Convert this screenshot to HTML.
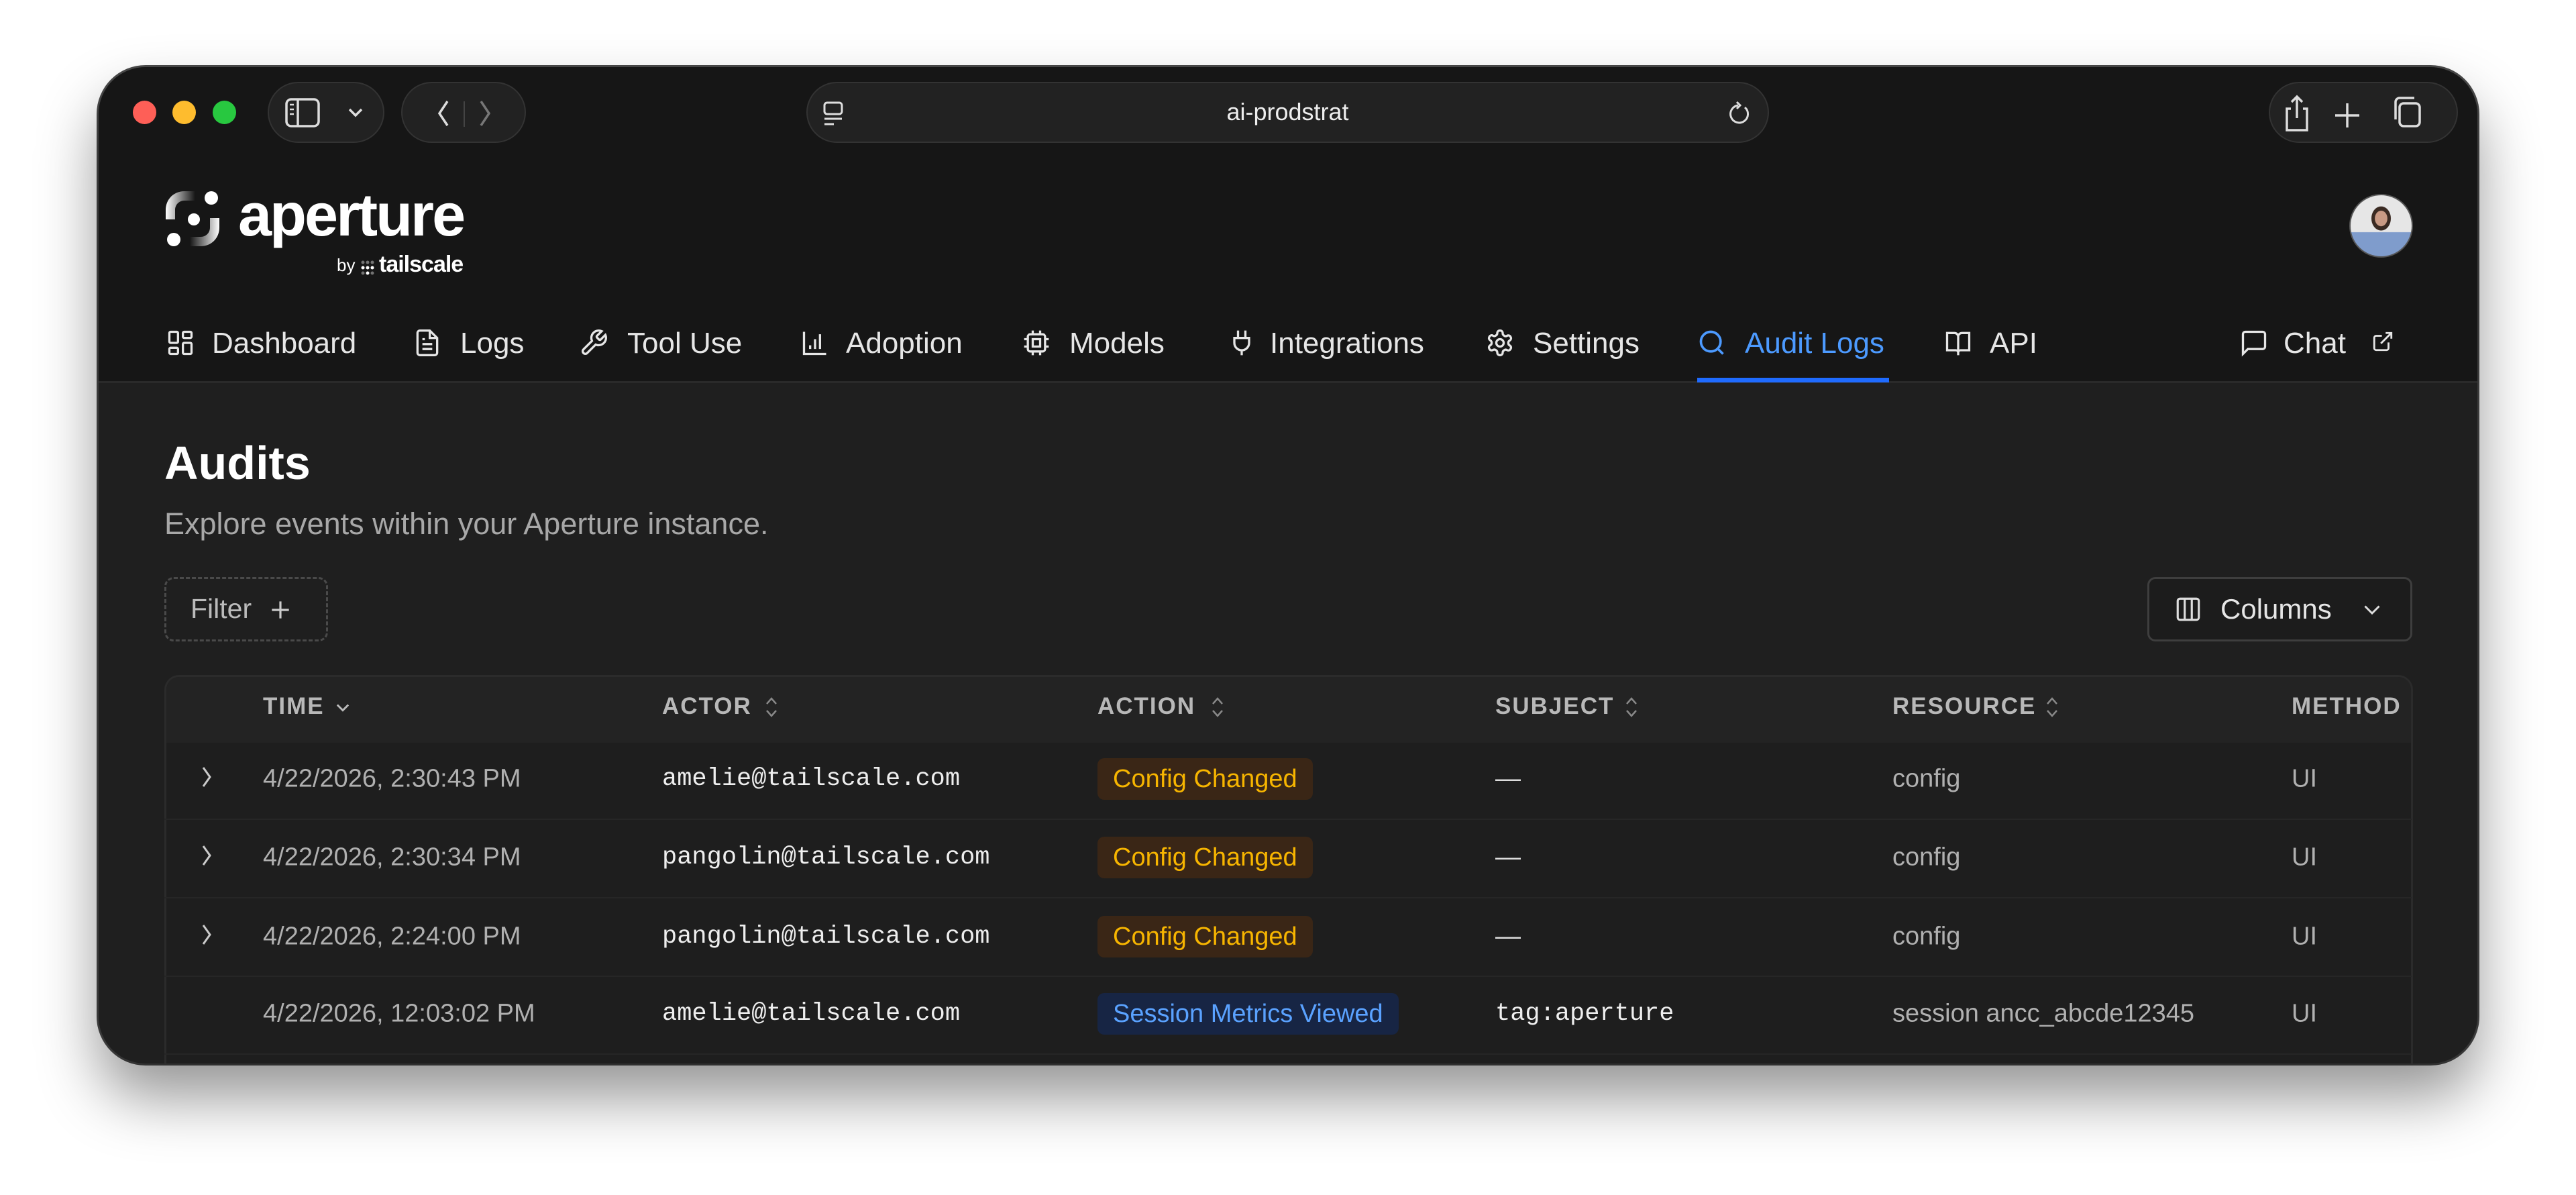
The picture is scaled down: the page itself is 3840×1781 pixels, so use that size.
<!DOCTYPE html>
<html><head><meta charset="utf-8"><style>
*{margin:0;padding:0;box-sizing:border-box}
html,body{width:3840px;height:1781px;background:#fff;overflow:hidden;font-family:"Liberation Sans",sans-serif}
.win{position:absolute;left:147px;top:100px;width:3546px;height:1485px;border-radius:70px;background:#1f1f1f;overflow:hidden;box-shadow:0 50px 90px rgba(0,0,0,.42),0 0 0 3px #4a4a4a;}
.head{position:absolute;left:0;top:0;width:100%;height:471px;background:#161616;border-bottom:3px solid #2a2a2a}
.a{position:absolute}
.pill{position:absolute;top:22px;height:91px;border-radius:46px;background:#222;border:2px solid #333}
.dot{position:absolute;top:50px;width:35px;height:35px;border-radius:50%}
.nav{position:absolute;top:412px;transform:translateY(-50%);color:#e6e6e6;font-size:44px;white-space:nowrap}
.ni{position:absolute;top:389px}
.th{position:absolute;top:953px;transform:translateY(-50%);color:#b8b8b8;font-size:35px;font-weight:bold;letter-spacing:2px;white-space:nowrap}
.td{position:absolute;transform:translateY(-50%);color:#b0b0b0;font-size:38px;white-space:nowrap}
.mono{font-family:"Liberation Mono",monospace;color:#eee;font-size:37px}
.badge{position:absolute;height:62px;border-radius:10px;padding:0 23px;line-height:62px;font-size:38px;transform:translateY(-50%)}
.cfg{background:#3a2616;color:#f7b500}
.ses{background:#172544;color:#5aa2ff}
.sep{position:absolute;left:98px;width:3350px;height:2px;background:#262626}
</style></head><body>
<div class="win">
 <div class="head"></div>
 <div class="dot" style="left:51px;background:#fe5f57"></div>
 <div class="dot" style="left:110px;background:#febc2e"></div>
 <div class="dot" style="left:170px;background:#28c840"></div>
 <div class="pill" style="left:252px;width:174px"></div>
 <svg class="a" style="left:278px;top:45px" width="130" height="46" viewBox="0 0 130 46" fill="none" stroke="#ddd" stroke-width="3.5"><rect x="2" y="3" width="48" height="40" rx="7"/><line x1="19" y1="3" x2="19" y2="43"/><path d="M7 11h6M7 18h6M7 25h6" stroke-width="2.5"/><path d="M96 18l9 9 9-9"/></svg>
 <div class="pill" style="left:451px;width:186px"></div>
 <svg class="a" style="left:470px;top:45px" width="150" height="48" viewBox="0 0 150 48" fill="none" stroke-width="3.5"><path d="M50 6L38 24l12 18" stroke="#ddd"/><line x1="75" y1="6" x2="75" y2="44" stroke="#444" stroke-width="2"/><path d="M100 6l12 18-12 18" stroke="#777"/></svg>
 <div class="pill" style="left:1055px;width:1435px"></div>
 <svg class="a" style="left:1076px;top:50px" width="40" height="40" viewBox="0 0 40 40" fill="none" stroke="#ddd" stroke-width="3"><rect x="6" y="3" width="26" height="17" rx="4"/><path d="M6 27h26M6 35h14"/></svg>
 <div class="a" style="left:1055px;width:1435px;top:67px;transform:translateY(-50%);text-align:center;color:#eee;font-size:36px">ai-prodstrat</div>
 <svg class="a" style="left:2426px;top:48px" width="40" height="44" viewBox="0 0 40 44" fill="none" stroke="#ddd" stroke-width="3"><path d="M28 12a13 13 0 1 1-10-3"/><path d="M16 4l5 5-5 5"/></svg>
 <div class="pill" style="left:3235px;width:282px"></div>
 <svg class="a" style="left:3252px;top:40px" width="250" height="60" viewBox="0 0 250 60" fill="none" stroke="#ddd" stroke-width="3.5"><path d="M16 22h-6v32h30V22h-6M25 4v32M17 12l8-8 8 8"/><path d="M100 14v36M82 32h36"/><rect x="178" y="14" width="30" height="34" rx="6"/><path d="M172 38V12a6 6 0 0 1 6-6h22"/></svg>
 <svg class="a" style="left:98px;top:183px" width="84" height="86" viewBox="0 0 84 86"><defs><linearGradient id="g1" x1="0" x2="1"><stop offset="0" stop-color="#fff"/><stop offset="1" stop-color="#fff" stop-opacity="0"/></linearGradient><linearGradient id="g2" x1="1" x2="0"><stop offset="0" stop-color="#fff"/><stop offset="1" stop-color="#fff" stop-opacity="0"/></linearGradient></defs><path d="M46 2H30C14 2 2 14 2 30v14h14V30c0-8 6-14 14-14h16z" fill="url(#g1)"/><path d="M38 84h16c16 0 28-12 28-28V42H68v14c0 8-6 14-14 14H38z" fill="url(#g2)"/><circle cx="70" cy="12" r="10" fill="#fff"/><circle cx="14" cy="74" r="10" fill="#fff"/><circle cx="44" cy="44" r="9" fill="#fff"/></svg>
 <div class="a" style="left:208px;top:170px;color:#fff;font-size:90px;font-weight:bold;letter-spacing:-3px">aperture</div>
 <div class="a" style="left:355px;top:280px;color:#fff;font-size:26px">by</div>
 <svg class="a" style="left:390px;top:287px" width="22" height="24" viewBox="0 0 22 24" fill="#fff"><circle cx="4" cy="4" r="2.5" opacity=".4"/><circle cx="11" cy="4" r="2.5" opacity=".4"/><circle cx="18" cy="4" r="2.5" opacity=".4"/><circle cx="4" cy="12" r="2.5"/><circle cx="11" cy="12" r="2.5"/><circle cx="18" cy="12" r="2.5"/><circle cx="4" cy="20" r="2.5" opacity=".4"/><circle cx="11" cy="20" r="2.5"/><circle cx="18" cy="20" r="2.5" opacity=".4"/></svg>
 <div class="a" style="left:418px;top:275px;color:#fff;font-size:34px;font-weight:bold;letter-spacing:-1px">tailscale</div>
 <div class="a" style="left:3355px;top:189px;width:95px;height:95px;border-radius:50%;background:radial-gradient(ellipse at 50% 38%,#c99a84 0 14%,#3a2a22 15% 22%,transparent 23%),linear-gradient(#e6e6e6 0 60%,#7f9ccc 61%);border:2px solid #555"></div>
 <svg class="ni" style="left:100px" width="44" height="44" viewBox="0 0 24 24" fill="none" stroke="#e6e6e6" stroke-width="1.8"><rect x="3" y="3" width="7" height="9" rx="1"/><rect x="14" y="3" width="7" height="5" rx="1"/><rect x="14" y="12" width="7" height="9" rx="1"/><rect x="3" y="16" width="7" height="5" rx="1"/></svg>
 <div class="nav" style="left:169px">Dashboard</div>
 <svg class="ni" style="left:468px" width="44" height="44" viewBox="0 0 24 24" fill="none" stroke="#e6e6e6" stroke-width="1.8"><path d="M14 2H6a2 2 0 0 0-2 2v16a2 2 0 0 0 2 2h12a2 2 0 0 0 2-2V8z"/><path d="M14 2v6h6M8 13h8M8 17h8M8 9h2"/></svg>
 <div class="nav" style="left:539px">Logs</div>
 <svg class="ni" style="left:716px" width="44" height="44" viewBox="0 0 24 24" fill="none" stroke="#e6e6e6" stroke-width="1.8"><path d="M14.7 6.3a1 1 0 0 0 0 1.4l1.6 1.6a1 1 0 0 0 1.4 0l3.8-3.8a6 6 0 0 1-7.9 7.9l-6.9 6.9a2.1 2.1 0 0 1-3-3l6.9-6.9a6 6 0 0 1 7.9-7.9z"/></svg>
 <div class="nav" style="left:788px">Tool Use</div>
 <svg class="ni" style="left:1046px" width="44" height="44" viewBox="0 0 24 24" fill="none" stroke="#e6e6e6" stroke-width="1.8"><path d="M3 3v18h18M8 17v-3M12 17V9M16 17V5"/></svg>
 <div class="nav" style="left:1114px">Adoption</div>
 <svg class="ni" style="left:1376px" width="44" height="44" viewBox="0 0 24 24" fill="none" stroke="#e6e6e6" stroke-width="1.8"><rect x="5" y="5" width="14" height="14" rx="2"/><rect x="9" y="9" width="6" height="6"/><path d="M9 2v3M15 2v3M9 19v3M15 19v3M2 9h3M2 15h3M19 9h3M19 15h3"/></svg>
 <div class="nav" style="left:1447px">Models</div>
 <svg class="ni" style="left:1682px" width="44" height="44" viewBox="0 0 24 24" fill="none" stroke="#e6e6e6" stroke-width="1.8"><path d="M9 2v6M15 2v6M6 8h12v4a6 6 0 0 1-12 0zM12 18v4"/></svg>
 <div class="nav" style="left:1746px">Integrations</div>
 <svg class="ni" style="left:2067px" width="44" height="44" viewBox="0 0 24 24" fill="none" stroke="#e6e6e6" stroke-width="1.8"><path d="M12.2 2h-.4a2 2 0 0 0-2 2v.2a2 2 0 0 1-1 1.7l-.4.3a2 2 0 0 1-2 0l-.2-.1a2 2 0 0 0-2.7.7l-.2.4a2 2 0 0 0 .7 2.7l.2.1a2 2 0 0 1 1 1.7v.5a2 2 0 0 1-1 1.7l-.2.1a2 2 0 0 0-.7 2.7l.2.4a2 2 0 0 0 2.7.7l.2-.1a2 2 0 0 1 2 0l.4.3a2 2 0 0 1 1 1.7V20a2 2 0 0 0 2 2h.4a2 2 0 0 0 2-2v-.2a2 2 0 0 1 1-1.7l.4-.3a2 2 0 0 1 2 0l.2.1a2 2 0 0 0 2.7-.7l.2-.4a2 2 0 0 0-.7-2.7l-.2-.1a2 2 0 0 1-1-1.7v-.5a2 2 0 0 1 1-1.7l.2-.1a2 2 0 0 0 .7-2.7l-.2-.4a2 2 0 0 0-2.7-.7l-.2.1a2 2 0 0 1-2 0l-.4-.3a2 2 0 0 1-1-1.7V4a2 2 0 0 0-2-2z"/><circle cx="12" cy="12" r="3"/></svg>
 <div class="nav" style="left:2138px">Settings</div>
 <svg class="ni" style="left:2383px" width="44" height="44" viewBox="0 0 24 24" fill="none" stroke="#4c9aff" stroke-width="2"><circle cx="11" cy="11" r="8"/><path d="M21 21l-4.3-4.3"/></svg>
 <div class="nav" style="left:2454px;color:#4c9aff">Audit Logs</div>
 <div class="a" style="left:2383px;top:463px;width:286px;height:7px;background:#1f6bff"></div>
 <svg class="ni" style="left:2750px" width="44" height="44" viewBox="0 0 24 24" fill="none" stroke="#e6e6e6" stroke-width="1.8"><path d="M12 7v15M3 18V4h6a3 3 0 0 1 3 3 3 3 0 0 1 3-3h6v14h-7a2 2 0 0 0-2 2 2 2 0 0 0-2-2z"/></svg>
 <div class="nav" style="left:2819px">API</div>
 <svg class="ni" style="left:3191px" width="44" height="44" viewBox="0 0 24 24" fill="none" stroke="#e6e6e6" stroke-width="1.8"><path d="M21 15a2 2 0 0 1-2 2H7l-4 4V5a2 2 0 0 1 2-2h14a2 2 0 0 1 2 2z"/></svg>
 <div class="nav" style="left:3257px">Chat</div>
 <svg class="a" style="left:3388px;top:392px" width="34" height="34" viewBox="0 0 24 24" fill="none" stroke="#e6e6e6" stroke-width="2"><path d="M15 3h6v6M10 14L21 3M18 13v6a2 2 0 0 1-2 2H5a2 2 0 0 1-2-2V8a2 2 0 0 1 2-2h6"/></svg>
 <div class="a" style="left:98px;top:550px;color:#fff;font-size:70px;font-weight:bold">Audits</div>
 <div class="a" style="left:98px;top:655px;color:#a8a8a8;font-size:45px">Explore events within your Aperture instance.</div>
 <div class="a" style="left:98px;top:760px;width:244px;height:96px;border:3px dashed #4a4a4a;border-radius:14px"></div>
 <div class="a" style="left:137px;top:784px;color:#bbb;font-size:41px">Filter</div>
 <svg class="a" style="left:252px;top:790px" width="38" height="38" viewBox="0 0 24 24" fill="none" stroke="#ccc" stroke-width="2"><path d="M12 4v16M4 12h16"/></svg>
 <div class="a" style="left:3054px;top:760px;width:395px;height:96px;border:3px solid #3e3e3e;border-radius:12px;background:#1c1c1c"></div>
 <svg class="a" style="left:3094px;top:787px" width="42" height="42" viewBox="0 0 24 24" fill="none" stroke="#ddd" stroke-width="1.8"><rect x="3" y="3" width="18" height="18" rx="2"/><path d="M9 3v18M15 3v18"/></svg>
 <div class="a" style="left:3163px;top:784px;color:#e6e6e6;font-size:42px">Columns</div>
 <svg class="a" style="left:3371px;top:790px" width="36" height="36" viewBox="0 0 24 24" fill="none" stroke="#ddd" stroke-width="2"><path d="M5 9l7 7 7-7"/></svg>
 <div class="a" style="left:98px;top:906px;width:3352px;height:700px;border:3px solid #2b2b2b;border-radius:22px;background:#1e1e1e;overflow:hidden">
  <div style="height:98px;background:#232323"></div>
 </div>
 <div class="th" style="left:245px">TIME</div>
 <svg class="a" style="left:350px;top:940px" width="28" height="28" viewBox="0 0 24 24" fill="none" stroke="#bbb" stroke-width="2.5"><path d="M5 9l7 7 7-7"/></svg>
 <div class="th" style="left:840px">ACTOR</div>
 <div class="th" style="left:1489px">ACTION</div>
 <div class="th" style="left:2082px">SUBJECT</div>
 <div class="th" style="left:2674px">RESOURCE</div>
 <div class="th" style="left:3269px">METHOD</div>
 <svg class="a" style="left:990px;top:936px" width="26" height="36" viewBox="0 0 26 36" fill="none" stroke="#888" stroke-width="2.5"><path d="M6 13l7-8 7 8M6 23l7 8 7-8"/></svg>
 <svg class="a" style="left:1655px;top:936px" width="26" height="36" viewBox="0 0 26 36" fill="none" stroke="#888" stroke-width="2.5"><path d="M6 13l7-8 7 8M6 23l7 8 7-8"/></svg>
 <svg class="a" style="left:2272px;top:936px" width="26" height="36" viewBox="0 0 26 36" fill="none" stroke="#888" stroke-width="2.5"><path d="M6 13l7-8 7 8M6 23l7 8 7-8"/></svg>
 <svg class="a" style="left:2899px;top:936px" width="26" height="36" viewBox="0 0 26 36" fill="none" stroke="#888" stroke-width="2.5"><path d="M6 13l7-8 7 8M6 23l7 8 7-8"/></svg>
 <div class="sep" style="top:1120px"></div>
 <div class="sep" style="top:1237px"></div>
 <div class="sep" style="top:1354px"></div>
 <div class="sep" style="top:1470px"></div>
 <svg class="a" style="left:150px;top:1040px" width="24" height="36" viewBox="0 0 24 36" fill="none" stroke="#ccc" stroke-width="3"><path d="M6 4l10 14-10 14"/></svg>
 <svg class="a" style="left:150px;top:1157px" width="24" height="36" viewBox="0 0 24 36" fill="none" stroke="#ccc" stroke-width="3"><path d="M6 4l10 14-10 14"/></svg>
 <svg class="a" style="left:150px;top:1275px" width="24" height="36" viewBox="0 0 24 36" fill="none" stroke="#ccc" stroke-width="3"><path d="M6 4l10 14-10 14"/></svg>

 <div class="td" style="left:245px;top:1061px">4/22/2026, 2:30:43 PM</div>
 <div class="td mono" style="left:840px;top:1061px">amelie@tailscale.com</div>
 <div class="badge cfg" style="left:1489px;top:1061px">Config Changed</div>
 <div class="td" style="left:2082px;top:1061px;color:#ddd">—</div>
 <div class="td" style="left:2674px;top:1061px">config</div>
 <div class="td" style="left:3269px;top:1061px">UI</div>

 <div class="td" style="left:245px;top:1178px">4/22/2026, 2:30:34 PM</div>
 <div class="td mono" style="left:840px;top:1178px">pangolin@tailscale.com</div>
 <div class="badge cfg" style="left:1489px;top:1178px">Config Changed</div>
 <div class="td" style="left:2082px;top:1178px;color:#ddd">—</div>
 <div class="td" style="left:2674px;top:1178px">config</div>
 <div class="td" style="left:3269px;top:1178px">UI</div>

 <div class="td" style="left:245px;top:1296px">4/22/2026, 2:24:00 PM</div>
 <div class="td mono" style="left:840px;top:1296px">pangolin@tailscale.com</div>
 <div class="badge cfg" style="left:1489px;top:1296px">Config Changed</div>
 <div class="td" style="left:2082px;top:1296px;color:#ddd">—</div>
 <div class="td" style="left:2674px;top:1296px">config</div>
 <div class="td" style="left:3269px;top:1296px">UI</div>

 <div class="td" style="left:245px;top:1411px">4/22/2026, 12:03:02 PM</div>
 <div class="td mono" style="left:840px;top:1411px">amelie@tailscale.com</div>
 <div class="badge ses" style="left:1489px;top:1411px">Session Metrics Viewed</div>
 <div class="td mono" style="left:2082px;top:1411px">tag:aperture</div>
 <div class="td" style="left:2674px;top:1411px">session ancc_abcde12345</div>
 <div class="td" style="left:3269px;top:1411px">UI</div>
</div>
</body></html>
